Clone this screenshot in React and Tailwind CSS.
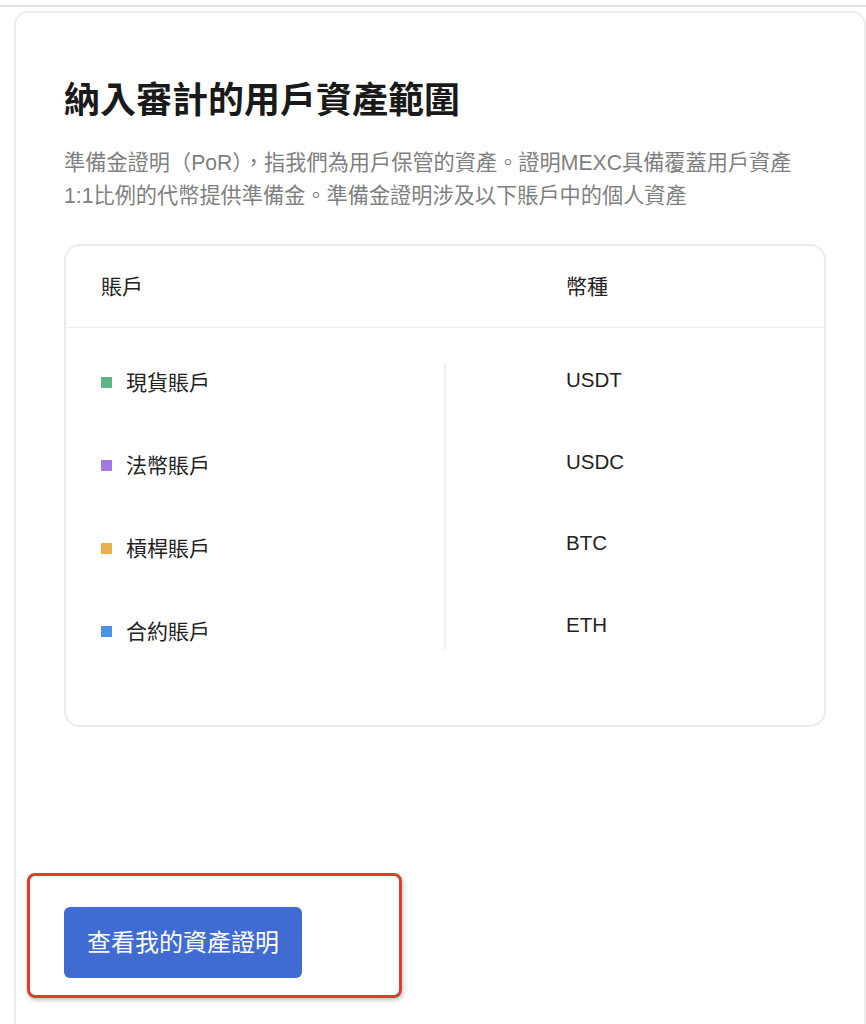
import React from "react";

const accounts = [
  { name: "現貨賬戶", color: "bg-[#5bb584]" },
  { name: "法幣賬戶", color: "bg-[#a378e0]" },
  { name: "槓桿賬戶", color: "bg-[#ebb04e]" },
  { name: "合約賬戶", color: "bg-[#4a91ea]" },
];

const coins = ["USDT", "USDC", "BTC", "ETH"];

export default function App() {
  return (
    <div className="relative w-[866px] h-[1024px] overflow-hidden bg-white font-['Liberation_Sans','Noto_Sans_CJK_TC',sans-serif]">
      <div className="mt-[5px] h-[2px] bg-[#e3e3e3]" />
      <div className="ml-[14px] mt-[4px] h-[1020px] rounded-t-[14px] border-l-2 border-t-2 border-r-2 border-[#ececec] pl-[48px] pr-[38px] pt-[66px]">
        <h1 className="text-[36px] leading-[44px] font-bold text-[#1a1a1a]">
          納入審計的用戶資產範圍
        </h1>
        <p className="mt-[23px] text-[21.2px] leading-[33px] text-[#7f7f7f] whitespace-nowrap">
          準備金證明（PoR），指我們為用戶保管的資產。證明MEXC具備覆蓋用戶資產
          <br />
          1:1比例的代幣提供準備金。準備金證明涉及以下賬戶中的個人資產
        </p>

        <div className="mt-[32px] w-[762px] rounded-[16px] border-2 border-[#ebebeb] text-[#222]">
          <div className="flex h-[82px] items-center border-b border-[#ededed] pl-[35px] text-[21px]">
            <div className="w-[465px]">賬戶</div>
            <div>幣種</div>
          </div>
          <div className="flex pb-[52px]">
            <div className="w-[378px] pt-[13px]">
              {accounts.map((a) => (
                <div key={a.name} className="flex h-[83px] items-center pl-[35px]">
                  <span className={`h-[11px] w-[11px] ${a.color}`} />
                  <span className="ml-[14px] text-[21px]">{a.name}</span>
                </div>
              ))}
            </div>
            <div className="mt-[35px] h-[287px] w-[2px] bg-[#efefef]" />
            <div className="ml-[120px] pt-[12px]">
              {coins.map((c) => (
                <div key={c} className="flex h-[81.5px] items-center text-[20.5px]">
                  {c}
                </div>
              ))}
            </div>
          </div>
        </div>

        <button className="mt-[180px] flex h-[71px] w-[238px] items-center justify-center rounded-[6px] bg-[#3f6bd2] text-[24px] text-white">
          查看我的資產證明
        </button>
      </div>

      <div className="absolute left-[27px] top-[873px] h-[125px] w-[375px] rounded-[8px] border-[3px] border-[#e23a2c] shadow-[1px_2px_4px_rgba(0,0,0,0.25)]" />
    </div>
  );
}
